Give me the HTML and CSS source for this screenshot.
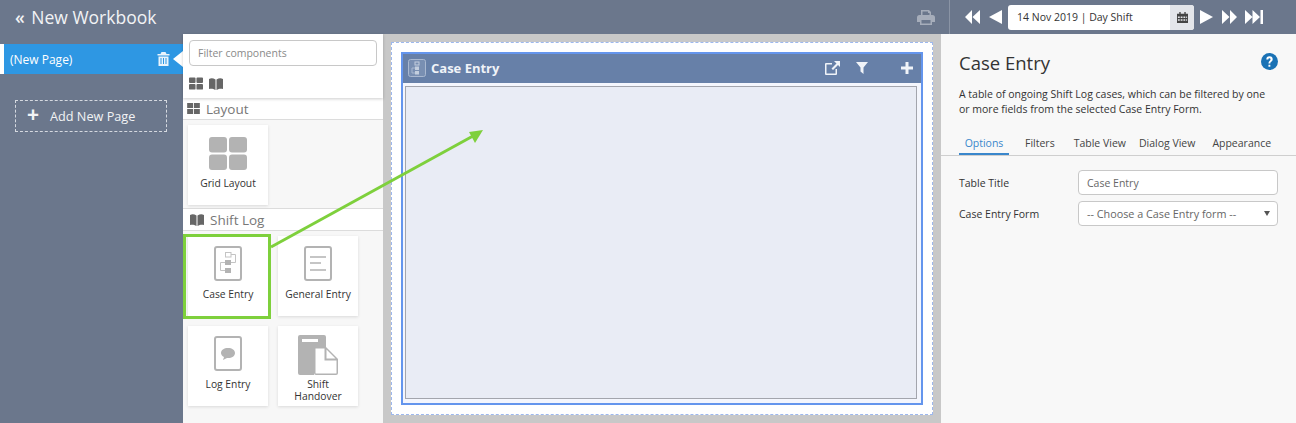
FILE: index.html
```html
<!DOCTYPE html>
<html lang="en">
<head>
    <meta charset="UTF-8">
    <title>New Workbook</title>
    <link rel="stylesheet" href="styles.css">
</head>
<body>

    <!-- Top bar -->
    <header class="topbar">
        <div class="wb-title"><span class="chevrons">«</span> New Workbook</div>
        <svg class="print-icon" viewBox="0 0 18 16"><path d="M4 6V1h8l2 2v3h1.500A2.500 2.500 0 0 1 18 8.500V13h-3v3H3v-3H0V8.500A2.500 2.500 0 0 1 2.500 6zm1.500 0h7V4H11V2.500H5.500zM4.500 11v3.500h9V11z" fill-rule="evenodd"/></svg>
        <div class="date-nav">
            <svg class="nav-icon first" viewBox="0 0 15 14"><path d="M7 0v14L0 7zM15 0v14L7.500 7z"/></svg>
            <svg class="nav-icon step" viewBox="0 0 13 14"><path d="M13 0v14L0 7z"/></svg>
            <div class="date-box">
                <span class="date-text">14 Nov 2019 | Day Shift</span>
                <span class="date-btn">
                    <svg viewBox="0 0 12 12" width="11" height="11"><path d="M0 2h2.500V0h1.500v2h4V0h1.500v2H12v10H0zM1 5v1.500h2V5zm3 0v1.500h2V5zm3 0v1.500h2V5zm3 0v1.500h1V5zM1 8v1.500h2V8zm3 0v1.500h2V8zm3 0v1.500h2V8zm3 0v1.500h1V8z" fill-rule="evenodd"/></svg>
                </span>
            </div>
            <svg class="nav-icon step" viewBox="0 0 13 14"><path d="M0 0v14l13-7z"/></svg>
            <svg class="nav-icon" viewBox="0 0 15 14"><path d="M0 0v14l7.500-7zM8 0v14l7-7z"/></svg>
            <svg class="nav-icon last" viewBox="0 0 18 14"><path d="M0 0v14l7.500-7zM7.500 0v14L15 7zM15.500 0H18v14h-2.500z"/></svg>
        </div>
    </header>

    <div class="main">

        <!-- Pages -->
        <nav class="pages">
            <div class="page-item">
                <span>(New Page)</span>
                <svg class="trash" viewBox="0 0 12 14"><path d="M4 0h4l1 2h3v1.500H0V2h3zM1 4.500h10V14H1zM3 6v6h1V6zm2.500 0v6h1V6zM8 6v6h1V6z" fill-rule="evenodd"/></svg>
            </div>
            <div class="add-page"><span class="add-plus">+</span> Add New Page</div>
        </nav>

        <!-- Component palette -->
        <aside class="palette">
            <div class="palette-top">
                <input class="filter" type="text" placeholder="Filter components">
                <div class="palette-tabs">
                    <svg class="grid-icon" viewBox="0 0 15 13"><path d="M0 1a1 1 0 0 1 1-1h5a1 1 0 0 1 1 1v4a1 1 0 0 1-1 1H1a1 1 0 0 1-1-1zM8 1a1 1 0 0 1 1-1h5a1 1 0 0 1 1 1v4a1 1 0 0 1-1 1H9a1 1 0 0 1-1-1zM0 8a1 1 0 0 1 1-1h5a1 1 0 0 1 1 1v4a1 1 0 0 1-1 1H1a1 1 0 0 1-1-1zM8 8a1 1 0 0 1 1-1h5a1 1 0 0 1 1 1v4a1 1 0 0 1-1 1H9a1 1 0 0 1-1-1z"/></svg>
                    <svg class="book-icon" viewBox="0 0 14 12"><path d="M0 1c2-1 4-1 6.500.5V12C4 10.500 2 10.500 0 11zM14 1c-2-1-4-1-6.500.5V12c2.500-1.500 4.500-1.500 6.500-1z"/></svg>
                </div>
            </div>

            <div class="section-head">
                <svg class="grid-icon small" viewBox="0 0 15 13"><path d="M0 0h7v6H0zM8 0h7v6H8zM0 7h7v6H0zM8 7h7v6H8z"/></svg>
                Layout
            </div>
            <div class="cards">
                <div class="card">
                    <svg class="card-icon grid-big" viewBox="0 0 38 33"><g fill="#b3b3b3"><rect width="18" height="15.500" rx="3"/><rect x="20" width="18" height="15.500" rx="3"/><rect y="17.500" width="18" height="15.500" rx="3"/><rect x="20" y="17.500" width="18" height="15.500" rx="3"/></g></svg>
                    <div class="card-label">Grid Layout</div>
                </div>
            </div>

            <div class="section-head">
                <svg class="book-icon small" viewBox="0 0 14 12"><path d="M0 1c2-1 4-1 6.500.5V12C4 10.500 2 10.500 0 11zM14 1c-2-1-4-1-6.500.5V12c2.500-1.500 4.500-1.500 6.500-1z"/></svg>
                Shift Log
            </div>
            <div class="cards">
                <div class="card selected">
                    <svg class="card-icon" viewBox="0 0 28 36">
                        <rect x="1" y="1" width="26" height="33" rx="2" fill="none" stroke="#b3b3b3" stroke-width="2"/>
                        <rect x="11.500" y="6.500" width="5.500" height="4.500" fill="none" stroke="#c4c4c4"/>
                        <rect x="11" y="14" width="6" height="5" fill="#b3b3b3"/>
                        <rect x="11" y="22" width="6" height="5" fill="#b3b3b3"/>
                        <path d="M17 8.500h4.500v8H17M11 16.500H6.500v8H11" fill="none" stroke="#c4c4c4"/>
                    </svg>
                    <div class="card-label">Case Entry</div>
                </div>
                <div class="card">
                    <svg class="card-icon" viewBox="0 0 28 36">
                        <rect x="1" y="1" width="26" height="33" rx="2" fill="none" stroke="#b3b3b3" stroke-width="2"/>
                        <path d="M6 11h16M6 17h11M6 24h16" stroke="#b3b3b3" stroke-width="1.500"/>
                    </svg>
                    <div class="card-label">General Entry</div>
                </div>
                <div class="card">
                    <svg class="card-icon" viewBox="0 0 28 36">
                        <rect x="1" y="1" width="26" height="33" rx="2" fill="none" stroke="#b3b3b3" stroke-width="2"/>
                        <path d="M14 12c4 0 7 2 7 5s-3 5-7 5h-1l-4 2 1-3c-2-1-3-2.500-3-4 0-3 3-5 7-5z" fill="#b3b3b3"/>
                    </svg>
                    <div class="card-label">Log Entry</div>
                </div>
                <div class="card">
                    <svg class="card-icon handover" viewBox="0 0 40 40">
                        <path d="M2 0h24a2 2 0 0 1 2 2v10H18a2 2 0 0 0-2 2v26H2a2 2 0 0 1-2-2V2a2 2 0 0 1 2-2z" fill="#b3b3b3"/>
                        <rect x="4" y="4" width="16" height="3" fill="#fff"/>
                        <path d="M16 12h12l12 12v14a2 2 0 0 1-2 2H18a2 2 0 0 1-2-2z" fill="#b3b3b3"/>
                        <path d="M17.500 13.500h9v12h12V38a.500.500 0 0 1-.500.500H18a.500.500 0 0 1-.500-.500z" fill="#fff"/>
                        <path d="M28.500 14.500l9 9h-9z" fill="#fff"/>
                    </svg>
                    <div class="card-label tight">Shift<br>Handover</div>
                </div>
            </div>
        </aside>

        <!-- Canvas -->
        <section class="canvas">
            <div class="canvas-page">
                <div class="widget">
                    <div class="widget-head">
                        <svg class="widget-icon" viewBox="0 0 18 18">
                            <rect x=".5" y=".5" width="17" height="17" rx="2" fill="#fff" fill-opacity=".12" stroke="#a9b8d0"/>
                            <rect x="7" y="3" width="4" height="3" fill="none" stroke="#c3cede"/>
                            <rect x="7" y="7.500" width="4" height="3.500" fill="#c3cede"/>
                            <rect x="7" y="12" width="4" height="3.500" fill="#c3cede"/>
                            <path d="M7 9H4v5h3" fill="none" stroke="#a9b8d0"/>
                        </svg>
                        <span class="widget-title">Case Entry</span>
                        <svg class="head-icon link" viewBox="0 0 15 14"><path d="M9 0h6v6l-2-2-5 5-1.500-1.500 5-5zM0 3a1 1 0 0 1 1-1h6v1.500H1.500v9h9V8H12v5a1 1 0 0 1-1 1H1a1 1 0 0 1-1-1z"/></svg>
                        <svg class="head-icon funnel" viewBox="0 0 12 12"><path d="M0 0h12L7.500 5.500V12l-3-2.500v-4z"/></svg>
                        <svg class="head-icon plus" viewBox="0 0 12 12"><path d="M4.500 0h3v4.500H12v3H7.500V12h-3V7.500H0v-3h4.500z"/></svg>
                    </div>
                    <div class="widget-body">
                        <div class="widget-frame"></div>
                    </div>
                </div>
            </div>
        </section>

        <!-- Properties -->
        <aside class="props">
            <div class="props-head">
                <h2>Case Entry</h2>
                <svg class="help" viewBox="0 0 16 16"><circle cx="8" cy="8" r="8" fill="#1a72b5"/><path d="M5 6a3 3 0 0 1 6 0c0 2-2.200 2-2.200 3.800H7C7 7.500 9 7.300 9 6a1 1 0 0 0-2.100 0zM7 11h1.800v2H7z" fill="#fff"/></svg>
            </div>
            <p class="desc">A table of ongoing Shift Log cases, which can be filtered by one or more fields from the selected Case Entry Form.</p>
            <div class="tabs">
                <span class="tab active">Options</span>
                <span class="tab filters">Filters</span>
                <span class="tab table">Table View</span>
                <span class="tab dialog">Dialog View</span>
                <span class="tab">Appearance</span>
            </div>
            <div class="form">
                <label>Table Title</label>
                <div class="field">Case Entry</div>
                <label>Case Entry Form</label>
                <div class="field select">-- Choose a Case Entry form --<span class="caret"></span></div>
            </div>
        </aside>
    </div>

    <!-- Green annotation arrow -->
    <svg class="arrow" width="1296" height="423" viewBox="0 0 1296 423">
        <path d="M271 247L473 136" stroke="#7ed03c" stroke-width="3" fill="none"/>
        <path d="M483 130L469 132L475 143z" fill="#7ed03c"/>
    </svg>

</body>
</html>
```

FILE: styles.css
```css
html, body {
    margin: 0;
    height: 100%;
}
body {
    font-family: "Open Sans", "Noto Sans", sans-serif;
    background-color: #6b778c;
    overflow: hidden;
    position: relative;
    color: #333;
}

/* Top bar */
.topbar {
    height: 34px;
    display: flex;
    align-items: center;
    background-color: #6b778c;
    color: #fff;
}
.wb-title {
    flex: 1;
    padding-left: 15px;
    font-size: 17.500px;
    color: #f2f3f5;
    white-space: nowrap;
}
.chevrons {
    font-weight: 600;
    margin-right: 2px;
}
.print-icon {
    width: 18px;
    height: 16px;
    fill: #a6adba;
    margin-right: 14px;
}
.date-nav {
    width: 347px;
    height: 34px;
    box-sizing: border-box;
    border-left: 1px solid #8a94a5;
    display: flex;
    align-items: center;
    padding-left: 15px;
    gap: 6px;
}
.nav-icon {
    width: 15px;
    height: 14px;
    fill: #fff;
    margin-left: 3px;
}
.nav-icon.first {
    margin-left: 0;
}
.nav-icon.step {
    width: 13px;
}
.date-box + .nav-icon {
    margin-left: 0;
}
.nav-icon.last {
    width: 18px;
    margin-left: 2px;
}
.date-box {
    width: 186px;
    height: 25px;
    display: flex;
    background-color: #fff;
    border-radius: 3px;
    overflow: hidden;
    font-size: 10.500px;
    color: #333;
    line-height: 25px;
}
.date-text {
    flex: 1;
    padding-left: 9px;
}
.date-btn {
    width: 24px;
    background-color: #e3e5ea;
    display: flex;
    align-items: center;
    justify-content: center;
}
.date-btn svg {
    fill: #444;
}

.main {
    display: flex;
    height: 389px;
}

/* Pages list */
.pages {
    width: 183px;
    flex: none;
    padding-top: 10px;
    box-sizing: border-box;
}
.page-item {
    height: 30px;
    box-sizing: border-box;
    border-left: 4px solid #fff;
    background-color: #2e97e3;
    color: #fff;
    font-size: 12px;
    padding: 0 13px 0 6px;
    display: flex;
    align-items: center;
    justify-content: space-between;
    position: relative;
}
.page-item::after {
    content: "";
    position: absolute;
    right: 0;
    top: 7px;
    border-style: solid;
    border-width: 8px 10px 8px 0;
    border-color: transparent #fff transparent transparent;
}
.trash {
    width: 13px;
    height: 14px;
    fill: #fff;
    opacity: 0.9;
}
.add-page {
    margin: 26px 16px 0 15px;
    height: 32px;
    box-sizing: border-box;
    border: 1px dashed #d5d9e0;
    color: #f2f3f5;
    font-size: 12.700px;
    font-weight: 500;
    display: flex;
    align-items: center;
    padding-left: 11px;
    gap: 11px;
}
.add-plus {
    font-size: 21px;
    font-weight: 700;
    line-height: 16px;
    margin-top: -4px;
}

/* Palette */
.palette {
    width: 200px;
    flex: none;
    background-color: #f7f7f7;
}
.palette-top {
    height: 64px;
    box-sizing: border-box;
    background-color: #fff;
    padding: 6px 6px 0;
    box-shadow: 0 1px 3px rgba(0, 0, 0, 0.2);
    position: relative;
}
.filter {
    display: block;
    width: 188px;
    height: 26px;
    box-sizing: border-box;
    border: 1px solid #c8c8c8;
    border-radius: 4px;
    padding: 0 8px;
    font-family: inherit;
    font-size: 10.500px;
}
.filter::placeholder {
    color: #8a8a8a;
}
.palette-tabs {
    display: flex;
    align-items: center;
    gap: 6px;
    margin-top: 11px;
}
.grid-icon {
    width: 14px;
    height: 13px;
    fill: #666;
}
.book-icon {
    width: 14px;
    height: 12px;
    fill: #666;
}
.grid-icon.small {
    width: 13px;
    height: 11px;
}
.book-icon.small {
    margin-left: 3px;
}
.section-head {
    height: 22px;
    box-sizing: border-box;
    background-color: #fff;
    border-bottom: 1px solid #dcdcdc;
    font-size: 13.500px;
    color: #777;
    padding-left: 4px;
    display: flex;
    align-items: center;
    gap: 6px;
}
.cards {
    display: flex;
    flex-wrap: wrap;
    gap: 10px;
    padding: 5px 0 3px 5px;
    border-bottom: 1px solid #dcdcdc;
}
.cards:last-child {
    border-bottom: none;
}
.card {
    width: 80px;
    height: 80px;
    background-color: #fff;
    box-shadow: 0 1px 3px rgba(0, 0, 0, 0.12);
    display: flex;
    flex-direction: column;
    align-items: center;
    text-align: center;
    box-sizing: border-box;
    padding-top: 10px;
    position: relative;
}
.card.selected::before {
    content: "";
    position: absolute;
    left: -5px;
    top: -2px;
    width: 88px;
    height: 85px;
    box-sizing: border-box;
    border: 3px solid #7ed03c;
}
.card-icon {
    width: 28px;
    height: 36px;
    flex: none;
}
.card-icon.grid-big {
    width: 38px;
    height: 33px;
    margin-top: 2px;
    margin-bottom: 1px;
}
.card-icon.handover {
    width: 40px;
    height: 40px;
    margin-top: -1px;
}
.card-label {
    font-size: 10.300px;
    line-height: 11px;
    margin-top: 7px;
    color: #333;
    white-space: nowrap;
}
.card-label.tight {
    margin-top: 3px;
    line-height: 12px;
}

/* Canvas */
.canvas {
    width: 558px;
    flex: none;
    background-color: #c8c8c8;
    padding: 8px;
    box-sizing: border-box;
}
.canvas-page {
    height: 373px;
    box-sizing: border-box;
    background-color: #fff;
    border: 1px dashed #9db8ee;
    padding: 9px;
}
.widget {
    height: 353px;
    box-sizing: border-box;
    border: 2px solid #6495ed;
    background-color: #f4f6fd;
    display: flex;
    flex-direction: column;
}
.widget-head {
    height: 29px;
    flex: none;
    box-sizing: border-box;
    background-color: #6780a8;
    display: flex;
    align-items: center;
    padding: 0 0 2px 5px;
    color: #f0f3f8;
}
.widget-icon {
    width: 18px;
    height: 18px;
    margin-right: 5px;
}
.widget-title {
    flex: 1;
    font-size: 13px;
    font-weight: 700;
}
.head-icon {
    fill: #f0f3f8;
}
.head-icon.link {
    width: 15px;
    height: 14px;
    margin-right: 16px;
}
.head-icon.funnel {
    width: 12px;
    height: 12px;
    margin-right: 33px;
}
.head-icon.plus {
    width: 12px;
    height: 12px;
    margin-right: 8px;
}
.widget-body {
    flex: 1;
    padding: 3px 4px 4px 2px;
    display: flex;
}
.widget-frame {
    flex: 1;
    border: 1px solid #a3a5ad;
    background-color: #e9ecf5;
}

/* Properties */
.props {
    flex: 1;
    background-color: #f8f8f8;
    padding-top: 15px;
}
.props-head {
    display: flex;
    align-items: center;
    justify-content: space-between;
    padding: 0 18px;
    height: 28px;
}
.props-head h2 {
    margin: -2px 0 0;
    font-size: 18.500px;
    font-weight: 400;
    color: #333;
}
.help {
    width: 17px;
    height: 17px;
    margin-top: -4px;
}
.desc {
    margin: 10px 18px 0;
    font-size: 10.500px;
    line-height: 15px;
    color: #333;
}
.tabs {
    display: flex;
    margin-top: 14px;
    height: 25px;
    box-sizing: border-box;
    border-bottom: 1px solid #cfcfcf;
    padding-left: 18px;
}
.tab {
    font-size: 10.500px;
    color: #444;
    padding: 5px 0 0;
    margin-right: 15px;
    white-space: nowrap;
}
.tab.active {
    color: #3a87cc;
    width: 50px;
    height: 24px;
    box-sizing: border-box;
    text-align: center;
    border-bottom: 2px solid #3a87cc;
    margin-right: 16px;
}
.tab.filters {
    margin-right: 19px;
}
.tab.table {
    margin-right: 13px;
}
.tab.dialog {
    margin-right: 17px;
}
.form {
    display: grid;
    grid-template-columns: 119px 200px;
    row-gap: 6px;
    padding: 14px 0 0 18px;
    align-items: center;
}
.form label {
    font-size: 10.500px;
    color: #333;
    padding-top: 1px;
}
.field {
    height: 25px;
    box-sizing: border-box;
    background-color: #fff;
    border: 1px solid #c8c8c8;
    border-radius: 4px;
    padding-left: 8px;
    font-size: 10.500px;
    line-height: 24px;
    color: #666;
}
.select {
    position: relative;
    font-size: 10.800px;
    line-height: 23px;
}
.caret {
    position: absolute;
    right: 7px;
    top: 9px;
    border-style: solid;
    border-width: 5px 3.500px 0;
    border-color: #555 transparent transparent;
}

/* Annotation */
.arrow {
    position: absolute;
    left: 0;
    top: 0;
    pointer-events: none;
}
```
